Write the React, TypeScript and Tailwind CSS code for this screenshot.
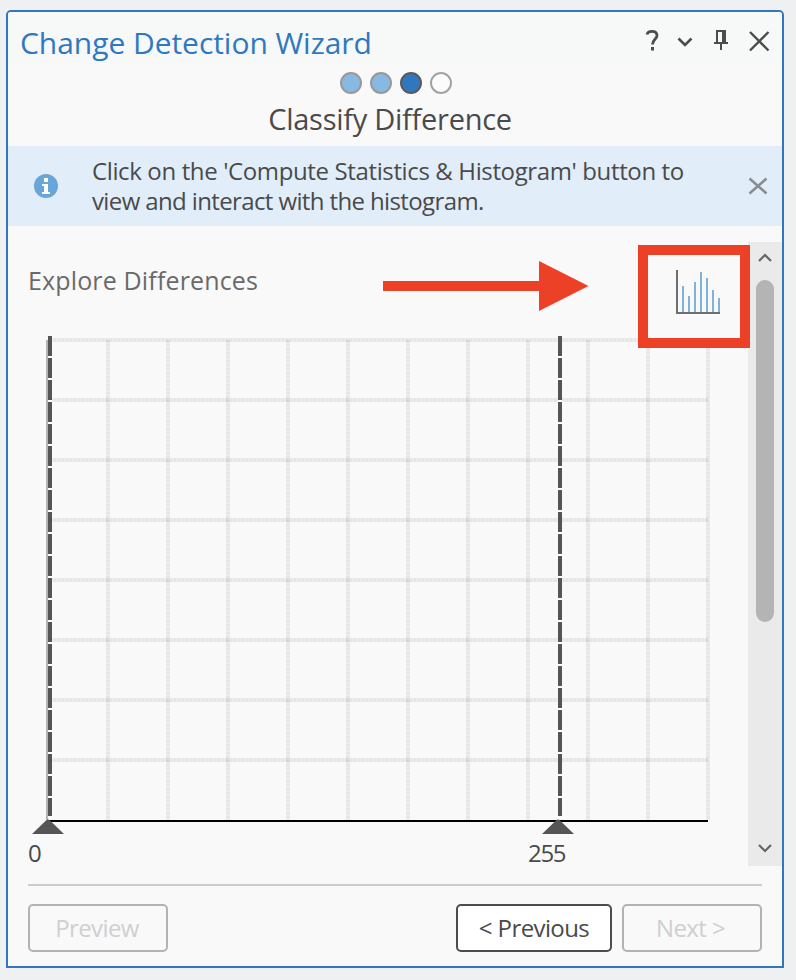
import React from "react";

const stepStyles = [
  "bg-[#87b9e2] border-[#999999]",
  "bg-[#87b9e2] border-[#999999]",
  "bg-[#3077bd] border-[#5b5b5b]",
  "bg-[#fbfbfb] border-[#a3a3a3]",
];

function TitleBar() {
  return (
    <header className="flex h-[54px] shrink-0 items-center justify-between bg-[#f7f9f9] pl-[12px] pr-[12px]">
      <h1 className="mt-[7px] whitespace-nowrap text-[30px] leading-[40px] tracking-[-0.05px] text-[#2f78c1]">
        Change Detection Wizard
      </h1>
      <svg width="128" height="24" viewBox="0 0 128 24" fill="none" stroke="#4c4c4c" className="mt-[4px]">
        <path d="M5 5.500C5.500 3 7.500 2.300 10 2.300C13.500 2.300 15 4 15 6.500C15 10.200 10.500 10.500 10.500 15.500" strokeWidth="2.8" />
        <path d="M10.500 18V21.500" strokeWidth="3" />
        <path d="M36.500 9.500L43 16L49.500 9.500" strokeWidth="2.6" />
        <path d="M75 14V2H83M72 14H86M79 14V21" strokeWidth="2" />
        <path d="M82 1V14" strokeWidth="4" />
        <path d="M108 3L126.500 21.500M126.500 3L108 21.500" strokeWidth="2.4" />
      </svg>
    </header>
  );
}

function Notice() {
  return (
    <div className="flex h-[80px] shrink-0 items-center bg-[#e1eefa] pl-[26px] pr-[14px]">
      <svg width="24" height="24" viewBox="0 0 24 24">
        <circle cx="12" cy="12" r="12" fill="#68a5d8" />
        <path d="M10 4h4v4h-4zM8 10h6v8h2v2H8v-2h2v-6H8z" fill="#fff" />
      </svg>
      <p className="ml-[34px] flex-1 whitespace-nowrap text-[24px] leading-[30px] text-[#4a4a4a]">
        <span className="block tracking-[-0.37px]">Click on the 'Compute Statistics &amp; Histogram' button to</span>
        <span className="block tracking-[-0.62px]">view and interact with the histogram.</span>
      </p>
      <svg width="20" height="18" viewBox="0 0 20 18" stroke="#8a8d90" strokeWidth="2.6">
        <path d="M1.500 1.500L18.500 16.500M18.500 1.500L1.500 16.500" />
      </svg>
    </div>
  );
}

function HistogramIcon() {
  return (
    <svg width="44" height="44" viewBox="0 0 44 44" shapeRendering="crispEdges">
      <path d="M7 42V16M13 42V26M19 42V12M25 42V2M31 42V8M37 42V20M43 42V28" stroke="#7eb3e0" strokeWidth="2" />
      <path d="M1 0V43H44" fill="none" stroke="#6e6e6e" strokeWidth="2" />
    </svg>
  );
}

function Chart() {
  const rows = Array.from({ length: 8 }, (_, i) => 10 + i * 60);
  const cols = Array.from({ length: 11 }, (_, i) => 80 + i * 60);
  return (
    <svg width="684" height="506" viewBox="0 0 684 506" className="block shrink-0">
      <g stroke="#000" strokeWidth="4" strokeOpacity="0.055">
        {rows.map((y) => (
          <path key={y} d={`M22 ${y}H680`} />
        ))}
        {cols.map((x) => (
          <path key={x} d={`M${x} 10V490`} />
        ))}
      </g>
      <g stroke="#000" strokeWidth="4" strokeOpacity="0.02" strokeDasharray="2 2">
        {rows.map((y) => (
          <path key={y} d={`M22 ${y}H680`} />
        ))}
        {cols.map((x) => (
          <path key={x} d={`M${x} 10V490`} />
        ))}
      </g>
      <path d="M19 10V490" stroke="#b4b4b4" strokeWidth="2" />
      <path d="M22 6V486M532 6V486" stroke="#fff" strokeWidth="4" />
      <path d="M22 6V486M532 6V486" stroke="#555" strokeWidth="4" strokeDasharray="20 2" />
      <path d="M20 491H680" stroke="#000" strokeWidth="2" />
      <path d="M4 504L18 490.500Q20 488.500 22 490.500L36 504ZM514 504L528 490.500Q530 488.500 532 490.500L546 504Z" fill="#555" />
    </svg>
  );
}

function ScrollBar() {
  return (
    <div className="flex w-[34px] shrink-0 flex-col items-center bg-[#eaeaea]">
      <svg width="14" height="9" viewBox="0 0 14 9" fill="none" stroke="#666" strokeWidth="2.2" className="mt-[11px]">
        <path d="M1 8L7 2L13 8" />
      </svg>
      <div className="mt-[18px] h-[342px] w-[18px] rounded-[9px] bg-[#b4b4b4]" />
      <svg width="14" height="9" viewBox="0 0 14 9" fill="none" stroke="#666" strokeWidth="2.2" className="mb-[13px] mt-auto">
        <path d="M1 1L7 7L13 1" />
      </svg>
    </div>
  );
}

export default function App() {
  return (
    <div className="h-[980px] w-[796px] overflow-hidden bg-[#eef0f2] pl-[6px] pt-[10px] font-['Open_Sans','Noto_Sans',sans-serif]">
      <div className="relative flex h-[958px] w-[778px] flex-col overflow-hidden rounded-t-[5px] border-2 border-[#3077bf] bg-[#f9f9f9]">
        <TitleBar />
        <div className="flex h-[80px] shrink-0 flex-col pt-[6px]">
          <div className="flex justify-center gap-[8px] pl-[2px]">
            {stepStyles.map((s, i) => (
              <div key={i} className={`h-[22px] w-[22px] rounded-full border-2 ${s}`} />
            ))}
          </div>
          <h2 className="mt-[5px] whitespace-nowrap pr-[10px] text-center text-[29px] leading-[40px] tracking-[-0.27px] text-[#4a4a4a]">
            Classify Difference
          </h2>
        </div>
        <Notice />
        <div className="mt-[16px] flex h-[624px] shrink-0">
          <div className="flex min-w-0 flex-1 flex-col pl-[20px]">
            <div className="flex h-[88px] shrink-0 items-start justify-between pr-[28px]">
              <h3 className="mt-[20px] whitespace-nowrap text-[25px] font-medium leading-[36px] tracking-[0.15px] text-[#6a6a6a]">
                Explore Differences
              </h3>
              <button className="mt-[28px]">
                <HistogramIcon />
              </button>
            </div>
            <Chart />
            <div className="flex h-[30px] shrink-0 pt-[2px] text-[24px] leading-[30px] tracking-[-1.3px] text-[#4a4a4a]">
              <span className="w-[500px]">0</span>
              <span>255</span>
            </div>
          </div>
          <ScrollBar />
        </div>
        <footer className="mx-[20px] mt-[18px] flex h-[68px] w-[734px] shrink-0 items-start border-t-2 border-[#cccccc] pt-[18px] text-[24px] leading-[42px] tracking-[-0.6px]">
          <button className="h-[48px] w-[140px] rounded-[5px] border-2 border-[#b3b3b3] pr-[2px] text-[#cfcfd2]">Preview</button>
          <button className="ml-auto h-[48px] w-[156px] whitespace-nowrap rounded-[5px] border-2 border-[#4c4c4c] bg-white text-[#4a4a4a]">
            &lt; Previous
          </button>
          <button className="ml-[10px] h-[48px] w-[140px] rounded-[5px] border-2 border-[#b3b3b3] pr-[3px] text-[#cfcfd2]">
            Next &gt;
          </button>
        </footer>
        <div className="pointer-events-none absolute left-[630px] top-[233px] h-[103px] w-[112px] border-[10px] border-[#ec4027]" />
        <svg width="206" height="50" viewBox="0 0 206 50" fill="#ec4027" className="pointer-events-none absolute left-[375px] top-[249px]">
          <path d="M0 20H156V0L205.500 25L156 50V30H0Z" />
        </svg>
      </div>
    </div>
  );
}
